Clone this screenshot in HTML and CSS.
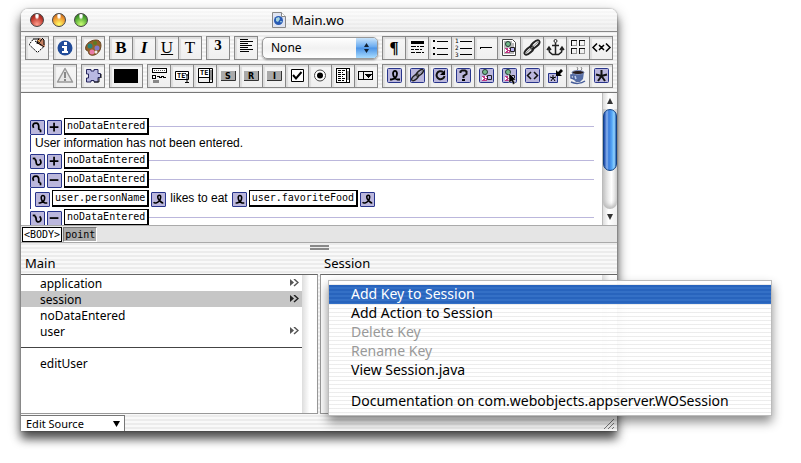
FILE: index.html
```html
<!DOCTYPE html>
<html lang="en">
<head>
<meta charset="utf-8">
<title>Main.wo</title>
<link rel="stylesheet" href="styles.css">
</head>
<body>
<svg class="defs" aria-hidden="true">
  <defs>
    <symbol id="ribbon" viewBox="0 0 15 15"><path d="M3 11.500h1.500C7 11 10 9 10 5.500 10 2 6 2 6 5.500 6 8 8 11 10.500 11.500H13" fill="none" stroke="#000" stroke-width="1.800"/></symbol>
    <symbol id="ribbon-end" viewBox="0 0 15 15"><path d="M2 10.500c1 2 4 1 6-1s3-7 .5-7-2.500 4 0 6 2 3 4.500 3" fill="none" stroke="#000" stroke-width="1.800"/></symbol>
    <symbol id="cond-open" viewBox="0 0 15 15"><path d="M3 8C1 4 3 2.500 6 2.500S9 5 9 7s-1 3 2 3" fill="none" stroke="#000" stroke-width="2"/><path d="M10 10h2v3h-2z"/></symbol>
    <symbol id="cond-close" viewBox="0 0 15 15"><path d="M4 5c2 0 2 2 2 4s2 3 4 2 2-4 0-6" fill="none" stroke="#000" stroke-width="2"/><path d="M2 3h3v2H2z"/></symbol>
    <symbol id="plus" viewBox="0 0 15 15"><path d="M2 7h10M7 2v10" stroke="#000" stroke-width="2"/></symbol>
    <symbol id="minus" viewBox="0 0 15 15"><path d="M2 7h10" stroke="#000" stroke-width="2"/></symbol>
    <symbol id="tile" viewBox="0 0 22 22"><rect x="4.500" y="3.500" width="14" height="14" rx="1" fill="#bbb7dc" stroke="#27348b"/></symbol>
    <symbol id="chain" viewBox="0 0 22 22"><g fill="none"><g stroke="#222" stroke-width="2"><ellipse cx="8" cy="13.500" rx="2.500" ry="5.500" transform="rotate(48 8 13.500)"/><ellipse cx="14" cy="7.500" rx="2.500" ry="5.500" transform="rotate(48 14 7.500)"/></g><path d="M4 17L18 4" stroke="#888"/></g></symbol>
    <symbol id="shapes" viewBox="0 0 22 22"><path d="M7 11h5v5H7z" fill="#c03a86"/><path d="M7 12h1v1h1v1H8v1H7zM10 11h1v1h1v1h-2zM10 14h1v1h-1z" fill="#fff"/><path d="M12.500 10.500h4v4h-4z" fill="#b9b3f0" stroke="#222"/><circle cx="10" cy="7" r="2.500" fill="#73b98a" stroke="#243b33"/></symbol>
    <symbol id="arrow" viewBox="0 0 9 8"><path d="M0 0l4 3.500L0 7z" fill="currentColor"/><path d="M4 0l4 3.500L4 7" fill="none" stroke="currentColor" stroke-width="1.500"/></symbol>
  </defs>
</svg>

<main class="window">
  <header class="titlebar">
    <div class="lights">
      <button class="light red" aria-label="Close"></button>
      <button class="light amber" aria-label="Minimize"></button>
      <button class="light green" aria-label="Zoom"></button>
    </div>
    <h1 class="title">
      <svg width="14" height="16" viewBox="0 0 14 16" aria-hidden="true"><path d="M.5.5h9l4 4v11H.5z" fill="#dfe4f2" stroke="#888"/><path d="M9.500.5v4h4" fill="#fff" stroke="#888"/><circle cx="6.500" cy="8.500" r="4.500" fill="#285bb5"/><path d="M4 6l3-1 1 2-2 3-2-1zM8 9l2 0-1 2z" fill="#a6d4dd"/></svg>
      Main.wo
    </h1>
  </header>

  <section class="toolbar" aria-label="Tools">
    <div class="tools">
      <div class="group"><button aria-label="Tag"><svg viewBox="0 0 22 22"><path d="M7 2.500L3.500 7v1l8 7.500L18.500 9z" fill="#fff"/><path d="M7 2.500L3.500 7v1l8 7.500L18.500 9" fill="none" stroke="#000" stroke-dasharray="2 1"/><path d="M7 2h5" stroke="#000"/><path d="M11 3l3-2 4 2 1 7-4-1-4-3z" fill="#c78263"/><path d="M9 4l6 4M13 1l-2 6M16 2l-4 5M16 1l2 2v5M14 7l4 3" stroke="#000" fill="none"/><path d="M12 3l2 2" stroke="#edb43a"/></svg></button></div>
      <div class="group"><button aria-label="Inspector"><svg viewBox="0 0 22 22"><circle cx="11" cy="11" r="7.500" fill="#204b99"/><path d="M10 5h3v3h-3zM8 9h5v5h1v2H8v-2h2v-3H8z" fill="#fff"/></svg></button></div>
      <div class="group"><button aria-label="Colors"><svg viewBox="0 0 22 22"><path d="M4 13C2 8 8 3 14 3c5 0 6 5 4 10-2 4-6 6-9 5-4-1-1-4-5-5z" fill="#946128" stroke="#65421e"/><circle cx="8" cy="9" r="2.500" fill="#28847a"/><circle cx="13" cy="6" r="2" fill="#5d7a25"/><circle cx="15" cy="11" r="2.500" fill="#8178c8"/><circle cx="10" cy="15" r="2.500" fill="#e97ba8"/><circle cx="14" cy="15" r="1.500" fill="#eee"/></svg></button></div>
      <div class="group">
        <button class="glyph bold">B</button><button class="glyph bold italic">I</button><button class="glyph underline">U</button><button class="glyph">T</button>
      </div>
      <div class="group"><button class="glyph bold size">3</button></div>
      <div class="group"><button aria-label="Align left"><svg viewBox="0 0 22 22" shape-rendering="crispEdges"><path d="M5 2.500h8M5 4.500h13M5 6.500h8M5 8.500h12M5 10.500h8M5 12.500h13M5 14.500h9" stroke="#000"/></svg></button></div>
      <label class="popup">
        <select aria-label="Heading style"><option>None</option></select>
        <svg width="21" height="20" viewBox="0 0 21 20" aria-hidden="true"><path d="M8 9l2.500-4L13 9zM8 11l2.500 4 2.500-4z" fill="#123"/></svg>
      </label>
      <div class="group">
        <button class="glyph bold">¶</button>
        <button aria-label="Rule"><svg viewBox="0 0 22 22" shape-rendering="crispEdges"><path d="M5 4h13v3H5z"/><path d="M5 9.500h5m1 0h2m1 0h4M5 12.500h3m1 0h4m1 0h2M5 15.500h4m1 0h5m1 0h2" stroke="#000"/></svg></button>
        <button aria-label="Bulleted list"><svg viewBox="0 0 22 22" shape-rendering="crispEdges"><path d="M4 3h2v2H4zM4 10h2v2H4zM4 16h2v2H4z"/><path d="M6 4.500h13M6 11.500h13M6 17.500h13" stroke="#000"/><path d="M6 4h2v1H6zM6 11h2v1H6zM6 17h2v1H6z" fill="#eee"/></svg></button>
        <button aria-label="Numbered list"><svg viewBox="0 0 22 22" shape-rendering="crispEdges"><g class="digits"><text x="3" y="6">1</text><text x="3" y="13">2</text><text x="3" y="20">3</text></g><path d="M8 4.500h12M8 11.500h12M8 17.500h12" stroke="#000"/></svg></button>
        <button aria-label="Line"><svg viewBox="0 0 22 22" shape-rendering="crispEdges"><path d="M5 10.500h12M5.500 10v2" stroke="#000" fill="none"/></svg></button>
        <button aria-label="Image"><svg viewBox="0 0 22 22"><path d="M4.500 2.500h10l3 3v13h-13z" fill="#fff" stroke="#444"/><path d="M6 4h8v2h2v11H6z" fill="#bbb"/><use href="#shapes"/></svg></button>
        <button aria-label="Link"><svg viewBox="0 0 22 22"><use href="#chain"/></svg></button>
        <button aria-label="Anchor"><svg viewBox="0 0 22 22"><path d="M11.500 6v11M8 8.500h7M4.500 11l1 4 3 2.500h6l3-2.500 1-4M3 13l2-3 2 3M16 13l2-3 2 3" fill="none" stroke="#222" stroke-width="1.500"/><circle cx="11.500" cy="4" r="1.500" fill="none" stroke="#222"/></svg></button>
        <button aria-label="Table"><svg viewBox="0 0 22 22" shape-rendering="crispEdges"><path d="M4.500 9V3.500H10M12.500 9V3.500H18M4.500 17v-5.500H10M12.500 17v-5.500H18" fill="none" stroke="#111"/><path d="M5 8.500h4.500V4M13 8.500h4.500V4M5 16.500h4.500V12M13 16.500h4.500V12" fill="none" stroke="#999"/></svg></button>
        <button aria-label="Custom tag"><svg viewBox="0 0 22 22"><path d="M7 6.500l-4 4 4 4M16 6.500l4 4-4 4M9 8l5 5M14 8l-5 5" fill="none" stroke="#000" stroke-width="1.500"/></svg></button>
      </div>
    </div>
    <div class="tools second">
      <div class="group"><button aria-label="Warnings"><svg viewBox="0 0 22 22"><path d="M11 3.500L18.500 17h-15z" fill="#e7e7e7" stroke="#999" stroke-width="1.500" stroke-linejoin="round"/><path d="M10 7h2v6h-2zM10 14h2v2h-2z" fill="#888"/></svg></button></div>
      <div class="group"><button aria-label="Component"><svg viewBox="0 0 22 22"><path d="M4.500 4.500H9V6h3V4.500h4v4h2.500v4H16V17h-4v-1.500H9V17H4.500v-4h2V9h-2z" fill="#b9b9e2" stroke="#26265e"/><path d="M17 13v4h-5M19 9v4" fill="none" stroke="#111"/></svg></button></div>
      <div class="group"><button class="wide" aria-label="Text color"><span class="swatch"></span></button></div>
      <div class="group">
        <button aria-label="Form"><svg viewBox="0 0 22 22" shape-rendering="crispEdges"><path d="M4.500 3.500h14v4h-14zM4.500 10.500h3v3h-3z" fill="#fff" stroke="#000"/><path d="M6 5.500h11" stroke="#555" stroke-dasharray="1 1"/><path d="M9 11.500h2v1h2v-1h2v1h3" fill="none" stroke="#000"/><path d="M5 15h6v3H5z" fill="#888"/></svg></button>
        <button aria-label="Text field"><svg viewBox="0 0 22 22"><path d="M4.500 6.500h13v8h-13z" fill="#fff" stroke="#000"/><text class="tiny" x="6" y="13">TE</text><path d="M14 8l2 2.500L18 8M16 10v8M14 17.500h4" fill="none" stroke="#000"/></svg></button>
        <button aria-label="Text area"><svg viewBox="0 0 22 22"><path d="M4.500 3.500h14v14h-14z" fill="#eee" stroke="#000"/><path d="M5 4h11v8H5z" fill="#fff"/><text class="tiny" x="6" y="10">TE</text><path d="M15.500 4v13M5 12.500h10" stroke="#000"/><path d="M16 5h2v10h-2z" fill="#888"/></svg></button>
        <button aria-label="Submit button"><svg viewBox="0 0 22 22"><path d="M4 6h14v10H4z" fill="#aaa"/><path d="M4 15.500h14.500V6" fill="none" stroke="#333"/><text class="key" x="8" y="14">S</text></svg></button>
        <button aria-label="Reset button"><svg viewBox="0 0 22 22"><path d="M4 6h14v10H4z" fill="#aaa"/><path d="M4 15.500h14.500V6" fill="none" stroke="#333"/><text class="key" x="8" y="14">R</text></svg></button>
        <button aria-label="Image button"><svg viewBox="0 0 22 22"><path d="M4 6h14v10H4z" fill="#aaa"/><path d="M4 15.500h14.500V6" fill="none" stroke="#333"/><text class="key" x="10" y="14">I</text></svg></button>
        <button aria-label="Check box"><svg viewBox="0 0 22 22"><path d="M5.500 4.500h12v12h-12z" fill="#fff" stroke="#000"/><path d="M7 10l3 3.500L15.500 7" fill="none" stroke="#000" stroke-width="2"/></svg></button>
        <button aria-label="Radio button"><svg viewBox="0 0 22 22"><circle cx="11" cy="10.500" r="5.500" fill="#fff" stroke="#444"/><circle cx="11" cy="10.500" r="3"/></svg></button>
        <button aria-label="List"><svg viewBox="0 0 22 22" shape-rendering="crispEdges"><path d="M4.500 3.500h13v14h-13z" fill="#fff" stroke="#000"/><path d="M6 5.500h7M6 7.500h5M6 9.500h7M6 11.500h5M6 13.500h7M6 15.500h6" stroke="#000" stroke-dasharray="3 1"/><path d="M14.500 4v13" stroke="#000"/><path d="M15 6h2v9h-2z" fill="#999"/></svg></button>
        <button aria-label="Pop-up menu"><svg viewBox="0 0 22 22" shape-rendering="crispEdges"><path d="M3.500 6.500h14v8h-14z" fill="#eee" stroke="#000"/><path d="M8.500 7v7" stroke="#000"/><path d="M9 9h8l-4 4z"/></svg></button>
      </div>
      <div class="group">
        <button aria-label="String"><svg viewBox="0 0 22 22"><use href="#tile"/><use href="#ribbon" x="4" y="3" width="15" height="15"/></svg></button>
        <button aria-label="Hyperlink"><svg viewBox="0 0 22 22"><use href="#tile"/><use href="#chain" x="3" y="2" width="17" height="17"/></svg></button>
        <button aria-label="Repetition"><svg viewBox="0 0 22 22"><use href="#tile"/><path d="M14 7a4 4 0 1 0 1.500 4" fill="none" stroke="#111" stroke-width="2"/><path d="M11 10h5V5z"/></svg></button>
        <button aria-label="Conditional"><svg viewBox="0 0 22 22"><use href="#tile"/><path d="M8.500 8V6.500L10 5.500h3l1.500 1V9l-3 2v2" fill="none" stroke="#111" stroke-width="2"/><path d="M10 14h3v2h-3z"/></svg></button>
        <button aria-label="Dynamic image"><svg viewBox="0 0 22 22"><use href="#tile"/><use href="#shapes"/></svg></button>
        <button aria-label="Active image"><svg viewBox="0 0 22 22"><use href="#tile"/><use href="#shapes"/><path d="M11 8v10l2.500-2 1.500 3.500 2-1-1.500-3.500H18z" stroke="#ddd" stroke-width=".5"/></svg></button>
        <button aria-label="Generic element"><svg viewBox="0 0 22 22"><use href="#tile"/><path d="M10 7l-3.500 3.500L10 14M13 7l3.500 3.500L13 14" fill="none" stroke="#111" stroke-width="1.500"/></svg></button>
        <button aria-label="Custom element"><svg viewBox="0 0 22 22"><path d="M4.500 8.500h9v9h-9z" fill="#bbb7dc" stroke="#27348b"/><path d="M9 10v3M6 12l3 1 3-1M7 16l2-3 2 3" fill="none" stroke="#000"/><path d="M12 5v6h6l-2-2 3-3-2-2-3 3z"/></svg></button>
        <button aria-label="Applet"><svg viewBox="0 0 22 22"><path d="M9 6l2-2-1-2M13 6l2-2-1-2" fill="none" stroke="#888"/><path d="M5 7h12l-1 7-3 3H9l-3-3z" fill="#566ea7"/><ellipse cx="11" cy="7.500" rx="6" ry="2" fill="#291d1c" stroke="#8294c4"/><path d="M6 10H4v3l3 1M4 17c4 2 10 2 14-1" fill="none" stroke="#465c99" stroke-width="1.500"/><path d="M8 11l1 3" stroke="#c3d0f0" stroke-width="1.500"/></svg></button>
        <button aria-label="Custom component"><svg viewBox="0 0 22 22"><use href="#tile"/><path d="M11.500 5v6M6 9.500l5.500 1.500L17 9.500M8 16l3.500-5 3.500 5" fill="none" stroke="#111" stroke-width="2"/></svg></button>
      </div>
    </div>
  </section>

  <section class="editor">
    <div class="page">
      <div class="line rule"><svg class="chip"><use href="#cond-open"/></svg><svg class="chip"><use href="#plus"/></svg><span class="key-name">noDataEntered</span></div>
      <p class="line body">User information has not been entered.</p>
      <div class="line rule"><svg class="chip"><use href="#cond-close"/></svg><svg class="chip"><use href="#plus"/></svg><span class="key-name">noDataEntered</span></div>
      <div class="line rule spaced"><svg class="chip"><use href="#cond-open"/></svg><svg class="chip"><use href="#minus"/></svg><span class="key-name">noDataEntered</span></div>
      <div class="line body tall">
        <svg class="chip"><use href="#ribbon"/></svg><span class="key-name">user.personName</span><svg class="chip"><use href="#ribbon-end"/></svg>
        <span class="words">likes to eat</span>
        <svg class="chip"><use href="#ribbon"/></svg><span class="key-name">user.favoriteFood</span><svg class="chip"><use href="#ribbon-end"/></svg>
      </div>
      <div class="line rule"><svg class="chip"><use href="#cond-close"/></svg><svg class="chip"><use href="#minus"/></svg><span class="key-name">noDataEntered</span></div>
    </div>
    <div class="scrollbar" aria-hidden="true">
      <svg width="14" height="16" viewBox="0 0 14 16"><path d="M4 11l3-6 3 6z" fill="#333"/></svg>
      <div class="track"><div class="thumb"></div></div>
      <svg width="14" height="16" viewBox="0 0 14 16"><path d="M4 5l3 6 3-6z" fill="#333"/></svg>
    </div>
  </section>

  <nav class="path"><button>&lt;BODY&gt;</button><button class="current">point</button></nav>

  <section class="browser">
    <div class="grip"></div>
    <div class="heads"><h2>Main</h2><h2>Session</h2></div>
    <div class="columns">
      <div class="column">
        <ul class="keys">
          <li>application<svg class="more"><use href="#arrow"/></svg></li>
          <li class="selected">session<svg class="more"><use href="#arrow"/></svg></li>
          <li>noDataEntered</li>
          <li>user<svg class="more"><use href="#arrow"/></svg></li>
          <li class="divider"></li>
          <li>editUser</li>
        </ul>
        <div class="gutter"></div>
      </div>
      <div class="column">
        <div class="keys"></div>
        <div class="gutter"></div>
        <div class="menu" role="menu">
          <button role="menuitem" class="active">Add Key to Session</button>
          <button role="menuitem">Add Action to Session</button>
          <button role="menuitem" disabled>Delete Key</button>
          <button role="menuitem" disabled>Rename Key</button>
          <button role="menuitem">View Session.java</button>
          <hr>
          <button role="menuitem">Documentation on com.webobjects.appserver.WOSession</button>
        </div>
      </div>
    </div>
  </section>

  <footer class="status">
    <label class="source">
      <select aria-label="Source"><option>Edit Source</option></select>
      <svg width="9" height="8" viewBox="0 0 9 8" aria-hidden="true"><path d="M1 1h7L4.500 7z"/></svg>
    </label>
    <svg width="15" height="15" viewBox="0 0 15 15" aria-hidden="true"><path d="M2 13L12 3M6 13l6-6M10 13l2-2" stroke="#777"/></svg>
  </footer>
</main>
</body>
</html>
```

FILE: styles.css
```css
:root {
  --ui: "Noto Sans", sans-serif;
  --mono: "DejaVu Sans Mono", monospace;
  --stripes: repeating-linear-gradient(#f9f9f9 0 2px, #ececec 2px 4px);
  --lilac: #bbb7dc;
  --navy: #27348b;
}

* { box-sizing: border-box; }

body {
  margin: 0;
  padding: 9px 184px 32px 21px;
  background: #fff;
  color: #000;
  font: 12px/16px var(--ui);
}

button, select {
  margin: 0;
  padding: 0;
  border: 0;
  background: none;
  color: inherit;
  font: inherit;
}

h1, h2, p, ul { margin: 0; padding: 0; font: inherit; list-style: none; }

.defs { position: absolute; width: 0; height: 0; }

.window {
  border-radius: 7px 7px 0 0;
  background: var(--stripes);
  box-shadow: 0 0 2px rgba(0, 0, 0, .5), 0 4px 14px rgba(0, 0, 0, .3), 0 8px 10px rgba(0, 0, 0, .6);
}

.titlebar {
  display: grid;
  grid-template-columns: 1fr auto 1fr;
  align-items: center;
  height: 23px;
  padding-right: 22px;
  border-bottom: 1px solid #888;
  border-radius: 7px 7px 0 0;
  background: linear-gradient(rgba(255, 255, 255, .7), rgba(225, 225, 225, .4)), var(--stripes);
}

.lights { display: flex; gap: 8px; padding-left: 9px; }

.light {
  width: 14px;
  height: 14px;
  border: 1px solid #444;
  border-radius: 50%;
}

.red { background: radial-gradient(ellipse at 50% 15%, #fff 0 12%, transparent 28%), radial-gradient(circle at 50% 85%, #ff9d8c, #bd3529 60%, #752018); }
.amber { background: radial-gradient(ellipse at 50% 15%, #fff 0 12%, transparent 28%), radial-gradient(circle at 50% 85%, #ffff69, #ed922d 60%, #99521b); }
.green { background: radial-gradient(ellipse at 50% 15%, #fff 0 12%, transparent 28%), radial-gradient(circle at 50% 85%, #cbff75, #4fa731 60%, #225d1b); }

.title { display: flex; align-items: center; gap: 6px; font-size: 13px; }

.toolbar {
  display: grid;
  gap: 4px;
  padding: 4px;
  border-bottom: 1px solid #777;
}

.tools { display: flex; gap: 4px; }
.second { padding-left: 28px; }

.group {
  display: flex;
  gap: 1px;
  height: 24px;
  border: 1px solid #888;
  background: #888;
}

.group button {
  display: flex;
  justify-content: center;
  align-items: center;
  width: 22px;
  background: linear-gradient(#f7f7f7, #efefef);
  box-shadow: inset 2px 2px 1px #ddd;
}

.group svg { width: 22px; height: 22px; }
.group .wide { width: 32px; }
.swatch { width: 24px; height: 14px; background: #000; }

.group .glyph { font: 17px/22px "Liberation Serif", serif; }
.group .bold { font-weight: bold; }
.group .italic { font-style: italic; }
.group .underline { text-decoration: underline; }
.group .size { align-items: flex-start; font-size: 15px; line-height: 16px; }

.digits { font: 6px "DejaVu Sans Mono", monospace; }
.tiny { font: bold 7px "DejaVu Sans Mono", monospace; }
.key { font: bold 8px "DejaVu Sans", sans-serif; }

.popup {
  display: flex;
  align-items: center;
  width: 116px;
  height: 22px;
  border: 1px solid #999;
  border-radius: 5px;
  background: linear-gradient(#fff, #f1f1f1 50%, #fff);
  box-shadow: 0 1px 2px rgba(0, 0, 0, .4);
  align-self: center;
  overflow: hidden;
}

.popup select { flex: 1; appearance: none; padding-left: 8px; height: 20px; min-width: 0; }
.popup svg { background: linear-gradient(#c8e4fb, #68aaf0 45%, #4c94e6 50%, #a8dcff); }

.editor {
  display: flex;
  height: 132px;
  background: #fff;
  overflow: hidden;
}

.page { flex: 1; padding: 25px 8px 0 9px; font: 12px/17px "Liberation Sans", sans-serif; }

.line { display: flex; align-items: flex-end; gap: 2px; height: 17px; }
.rule::after { content: ""; flex: 1; height: 1px; margin-left: -2px; align-self: center; background: var(--lilac); }
.spaced { margin-top: 2px; }
.body { padding-left: 4px; border-left: 1px solid var(--navy); }
.tall { height: 21px; padding-top: 2px; padding-bottom: 2px; }

.chip {
  width: 15px;
  height: 15px;
  border: 1px solid var(--navy);
  border-radius: 1px;
  background: var(--lilac);
}

.key-name {
  height: 17px;
  padding: 0 2px;
  border: 1px solid #000;
  border-right-width: 2px;
  border-bottom-width: 2px;
  font: 10px/14px var(--mono);
}

.words { padding: 0 2px; }

.scrollbar {
  display: flex;
  flex-direction: column;
  width: 15px;
  border-left: 1px solid #bbb;
  background: linear-gradient(90deg, #ddd, #fff 40%, #f0f0f0);
}

.track { flex: 1; border-radius: 0 0 7px 7px; background: linear-gradient(90deg, #ccc, #fff 60%, #ddd); box-shadow: inset 0 -3px 4px #bbb; }

.thumb {
  height: 62px;
  border: 1px solid #124283;
  border-radius: 7px;
  background: linear-gradient(90deg, #1644a8, #8ab4ef 25%, #397bdc 40%, #54a5f5 65%, #91d5ff 85%, #2c62b4);
}

.path {
  display: flex;
  gap: 1px;
  height: 18px;
  padding: 1px;
  border-top: 1px solid #aaa;
  border-bottom: 1px solid #aaa;
  background: #e5e5e5;
}

.path button {
  height: 15px;
  padding: 0 1px;
  border: 1px solid #000;
  background: #fff;
  font: 10px/12px var(--mono);
}

.path .current { border-color: #777 #fff #fff #777; background: #aaa; }

.grip { width: 19px; height: 5px; margin: 0 auto; border: solid #888; border-width: 2px 0; }
.browser { padding-top: 2px; }

.heads, .columns { display: grid; grid-template-columns: 297px 1fr; gap: 2px; }
.heads h2 { padding: 6px 0 3px 4px; font-size: 13px; line-height: 15px; }

.column {
  position: relative;
  display: flex;
  height: 140px;
  border: solid #999;
  border-width: 1px 1px 1px 0;
  border-top-color: #666;
  background: #fff;
}

.column + .column { border-left-width: 1px; border-right-width: 0; }

.keys { flex: 1; }
.keys li { display: flex; justify-content: space-between; align-items: center; height: 16px; padding: 2px 3px 0 19px; }
.keys .selected { background: #c6c6c6; }
.keys .divider { padding: 0; }
.divider::after { content: ""; flex: 1; height: 1px; background: #444; }
.more { width: 9px; height: 8px; margin-bottom: 2px; color: #555; }
.selected .more { color: #222; }

.gutter { width: 15px; background: linear-gradient(90deg, #ddd, #fff 50%); }

.menu {
  position: absolute;
  top: 5px;
  left: 7px;
  display: flex;
  flex-direction: column;
  width: 444px;
  padding: 4px 0;
  border: 1px solid #bbb;
  background: repeating-linear-gradient(rgba(255, 255, 255, .96) 0 3px, rgba(236, 236, 236, .96) 3px 4px);
  box-shadow: 0 6px 10px rgba(0, 0, 0, .45);
  font-size: 14px;
}

.menu button { height: 19px; padding: 0 0 2px 22px; line-height: 17px; text-align: left; }
.menu button:disabled { color: #999; }
.menu .active { background: repeating-linear-gradient(#2864bd 0 2px, #3470c6 2px 4px); color: #fff; }
.menu hr { height: 12px; margin: 0; border: 0; }

.status { display: flex; justify-content: space-between; align-items: flex-end; height: 17px; }

.source {
  display: flex;
  align-items: center;
  width: 104px;
  height: 16px;
  padding-right: 3px;
  border: solid #777;
  border-width: 1px 1px 0 0;
  background: #fff;
  font-size: 11px;
}

.source select { flex: 1; appearance: none; padding-left: 5px; }
```
